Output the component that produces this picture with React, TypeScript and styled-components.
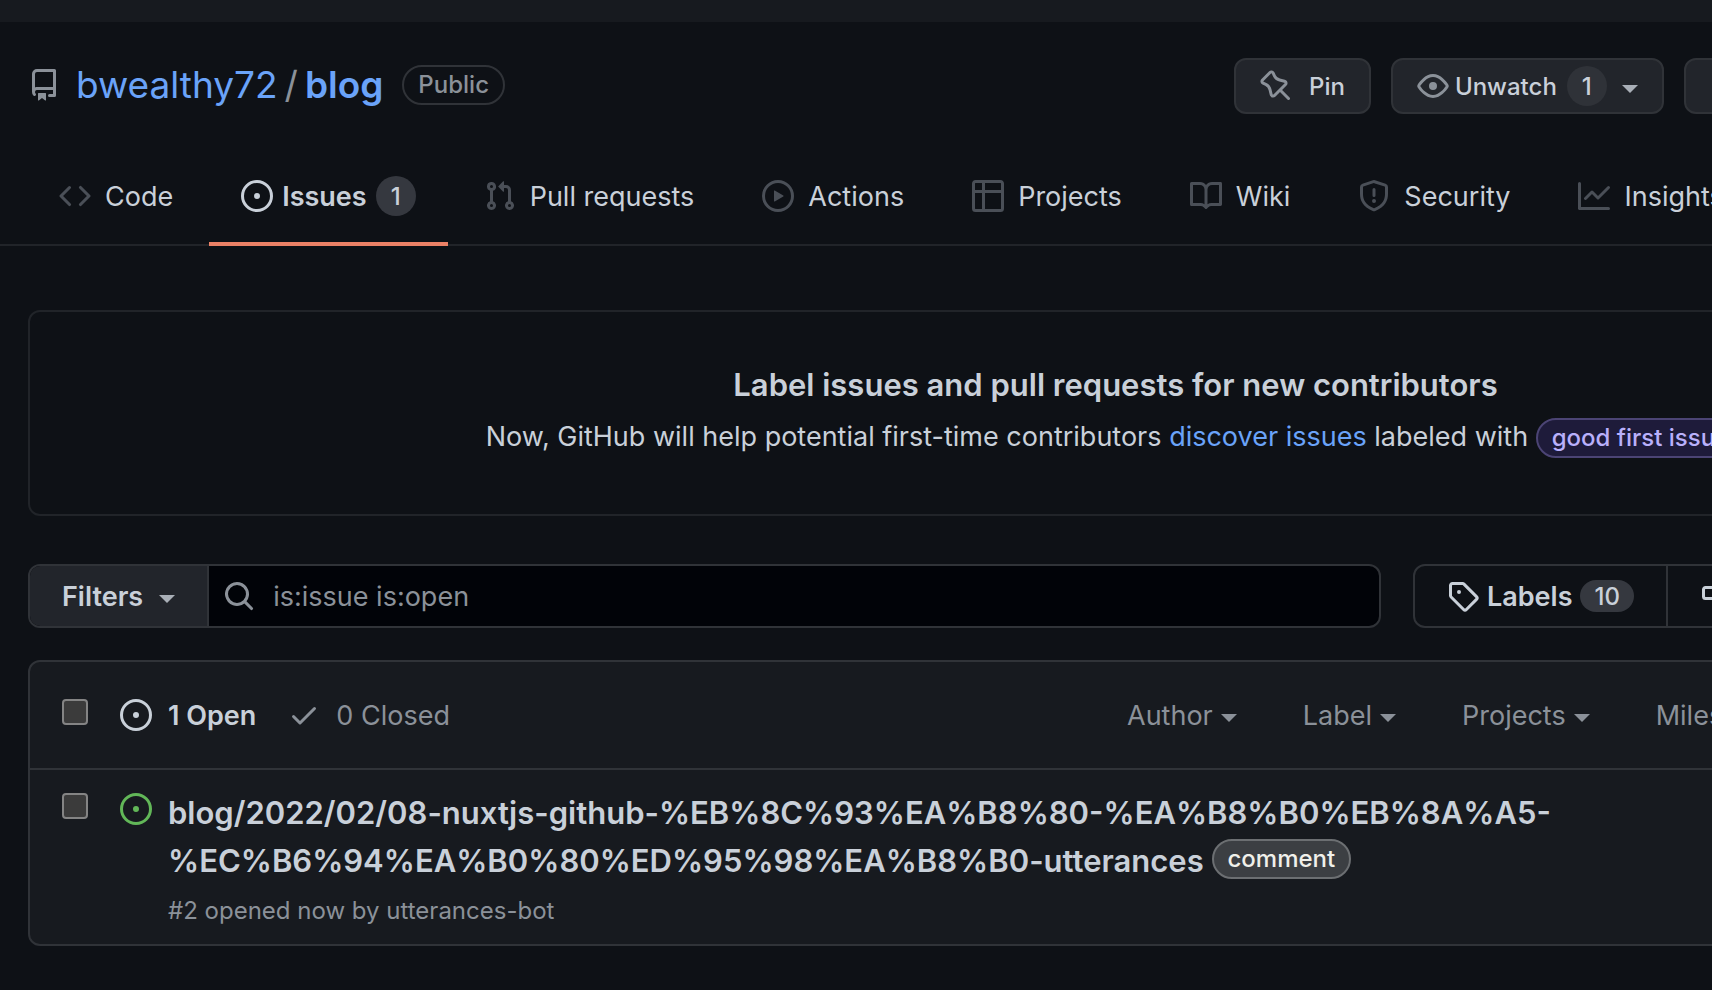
import React from "react";
import styled, { createGlobalStyle, css } from "styled-components";

const color = {
  canvas: "#0e1116",
  inset: "#010308",
  subtle: "#171a1f",
  button: "#22252b",
  border: "#303338",
  borderMuted: "#212429",
  text: "#c9d0d9",
  muted: "#8b9199",
  caret: "#a9afb7",
  faint: "#4a4f57",
  link: "#6aa3f9",
  counter: "#35383f",
  accent: "#eb8166",
  open: "#62b758",
};

const size = { name: "37px", heading: "31px", body: "27px", small: "24px" };

const GlobalStyle = createGlobalStyle`
  *, *::before, *::after { box-sizing: border-box; }
  body {
    margin: 0;
    background: ${color.canvas};
    color: ${color.text};
    font-family: Inter, "Liberation Sans", sans-serif;
    font-size: ${size.body};
  }
  button, input { font: inherit; color: inherit; }
  a { color: inherit; text-decoration: none; }
  h1, h2, h3, p { margin: 0; }
`;

const Viewport = styled.div`
  min-height: 100vh;
  overflow: hidden;
`;

/* The repository page is wider than the window and runs past its right edge. */
const Canvas = styled.div`
  width: calc(100% + 519px);
`;

const TopBar = styled.div`
  height: 22px;
  background: ${color.subtle};
`;

const Header = styled.header`
  display: flex;
  align-items: center;
  padding: 36px 28px;
`;

const RepoTitle = styled.h1`
  flex: 1;
  display: flex;
  align-items: center;
  height: 56px;
  padding-bottom: 3px;
  font-size: ${size.name};
  font-weight: 400;
  line-height: 48px;
  color: ${color.muted};
`;

const OwnerLink = styled.a`
  margin-left: 16px;
  color: ${color.link};
`;

const RepoLink = styled(OwnerLink)`
  margin-left: 0;
  font-weight: 600;
`;

const Slash = styled.span`
  margin: 0 7px;
`;

const pill = css`
  display: inline-block;
  padding: 0 14px;
  border: 2px solid;
  border-radius: 20px;
  font-size: ${size.small};
  font-weight: 500;
  line-height: 36px;
  white-space: nowrap;
`;

const Visibility = styled.span`
  ${pill}
  margin-left: 19px;
  border-color: ${color.border};
`;

const GoodFirstLabel = styled.a`
  ${pill}
  background: #1e1b3a;
  border-color: #4b4474;
  color: #b9b0fb;
`;

const CommentLabel = styled.a`
  ${pill}
  vertical-align: 5px;
  background: #3c3f43;
  border-color: #6c6f72;
  color: #f0f0ea;
`;

const Actions = styled.div`
  flex: 0 0 969px;
  display: flex;
  gap: 20px;
`;

const ActionButton = styled.button<{ $grow?: boolean }>`
  flex: ${(p) => (p.$grow ? "1" : "none")};
  display: flex;
  align-items: center;
  height: 56px;
  padding: 0 24px;
  border: 2px solid ${color.border};
  border-radius: 12px;
  background: ${color.button};
  font-size: ${size.small};
  font-weight: 500;
`;

const Gap = styled.span<{ $w: number }>`
  flex: none;
  width: ${(p) => p.$w}px;
`;

const Icon = styled.svg<{ $color?: string }>`
  flex: none;
  display: block;
  width: 32px;
  height: 32px;
  fill: ${(p) => p.$color ?? "currentColor"};
`;

const Counter = styled.span<{ $wide?: boolean; $bg?: string }>`
  display: inline-flex;
  align-items: center;
  justify-content: center;
  min-width: 40px;
  height: ${(p) => (p.$wide ? "32px" : "40px")};
  padding: 0 ${(p) => (p.$wide ? "14px" : "8px")};
  border-radius: 20px;
  background: ${(p) => p.$bg ?? color.counter};
  font-size: ${size.small};
  font-weight: 500;
`;

const Caret = styled.span<{ $soft?: boolean }>`
  flex: none;
  margin-top: 6px;
  border: 8px solid transparent;
  border-top-color: ${(p) => (p.$soft ? color.caret : "currentColor")};
  border-bottom: 0;
`;

const Tabs = styled.nav`
  display: flex;
  gap: 4px;
  padding-left: 27px;
  border-bottom: 2px solid ${color.borderMuted};
`;

const Tab = styled.a<{ $selected?: boolean }>`
  flex: none;
  display: flex;
  align-items: center;
  gap: ${(p) => (p.$selected ? "9px" : "14px")};
  height: 96px;
  margin-bottom: -2px;
  padding: 0 32px;
  border-bottom: 4px solid ${(p) => (p.$selected ? color.accent : "transparent")};
  font-weight: ${(p) => (p.$selected ? 600 : 400)};
`;

const Stage = styled.main`
  padding: 64px 28px 44px;
`;

const Blankslate = styled.section`
  padding: 49px 64px 56px;
  border: 2px solid ${color.borderMuted};
  border-radius: 12px;
  text-align: center;
`;

const BlankslateTitle = styled.h2`
  font-size: ${size.heading};
  font-weight: 600;
  line-height: 48px;
`;

const BlankslateText = styled.p`
  margin-top: 7px;
  line-height: 42px;
`;

const TextLink = styled.a`
  color: ${color.link};
`;

const Toolbar = styled.div`
  display: flex;
  gap: 32px;
  margin-top: 48px;
`;

const joined = css`
  display: flex;
  height: 64px;
  border: 2px solid ${color.border};
  border-radius: 12px;
  overflow: hidden;
`;

const SearchForm = styled.form`
  ${joined}
  flex: 1;
  background: ${color.inset};
`;

const FiltersButton = styled.button`
  flex: none;
  display: flex;
  align-items: center;
  gap: 16px;
  padding: 0 32px;
  border: 0;
  border-right: 2px solid ${color.border};
  background: ${color.button};
  font-weight: 600;
`;

const SearchField = styled.label`
  flex: 1;
  display: flex;
  align-items: center;
  gap: 18px;
  padding-left: 14px;
  color: ${color.muted};
`;

const SearchInput = styled.input`
  flex: 1;
  min-width: 0;
  height: 100%;
  padding: 0;
  border: 0;
  outline: 0;
  background: transparent;
`;

const LabelNav = styled.nav`
  ${joined}
  flex: 0 0 790px;
`;

const LabelNavLink = styled.a<{ $grow?: boolean }>`
  flex: ${(p) => (p.$grow ? "1" : "none")};
  display: flex;
  align-items: center;
  gap: 8px;
  padding: 0 32px;
  font-weight: 600;

  & + & {
    border-left: 2px solid ${color.border};
  }
`;

const IssueBox = styled.section`
  margin-top: 32px;
  border: 2px solid ${color.border};
  border-radius: 12px;
  background: ${color.subtle};
`;

const IssueBoxHeader = styled.div`
  display: flex;
  align-items: center;
  height: 108px;
  padding-left: 32px;
  border-bottom: 2px solid ${color.border};
  color: ${color.muted};
`;

const Checkbox = styled.input`
  appearance: none;
  flex: none;
  width: 26px;
  height: 26px;
  margin: 0 32px 6px 0;
  border: 2px solid #848484;
  border-radius: 4px;
  background: #3b3b3b;
`;

const StateLink = styled.a<{ $current?: boolean }>`
  display: flex;
  align-items: center;
  gap: 16px;
  margin-right: 32px;
  color: ${(p) => (p.$current ? color.text : "inherit")};
  font-weight: ${(p) => (p.$current ? 600 : 400)};
`;

const FilterMenus = styled.div`
  flex: 0 0 1074px;
  display: flex;
  gap: 66px;
  margin-left: auto;
`;

const FilterMenu = styled.button`
  display: flex;
  align-items: center;
  gap: 8px;
  padding: 0;
  border: 0;
  background: none;
`;

const IssueRow = styled.article`
  display: flex;
  align-items: flex-start;
  padding: 19px 32px 15px;
`;

const RowMark = styled.div`
  display: flex;
  align-items: flex-start;
  padding: 4px 16px 0 0;
`;

const IssueBody = styled.div`
  max-width: 1500px;
`;

const IssueTitle = styled.h3`
  font-size: ${size.heading};
  font-weight: 600;
  line-height: 48px;
`;

const IssueMeta = styled.p`
  margin-top: 8px;
  color: ${color.muted};
  font-size: ${size.small};
  line-height: 36px;
`;

const paths = {
  repo: "M2 2.5A2.5 2.5 0 014.5 0h8.75a.75.75 0 01.75.75v12.5a.75.75 0 01-.75.75h-2.5a.75.75 0 110-1.5h1.75v-2h-8a1 1 0 00-.714 1.7.75.75 0 01-1.072 1.05A2.495 2.495 0 012 11.5v-9zm10.5-1V9h-8c-.356 0-.694.074-1 .208V2.5a1 1 0 011-1h8zM5 12.25v3.25a.25.25 0 00.4.2l1.45-1.087a.25.25 0 01.3 0L8.6 15.7a.25.25 0 00.4-.2v-3.25a.25.25 0 00-.25-.25h-3.5a.25.25 0 00-.25.25z",
  code: "M4.72 3.22a.75.75 0 011.06 1.06L2.06 8l3.72 3.72a.75.75 0 11-1.06 1.06L.47 8.53a.75.75 0 010-1.06l4.25-4.25zm6.56 0a.75.75 0 10-1.06 1.06L13.94 8l-3.72 3.72a.75.75 0 101.06 1.06l4.25-4.25a.75.75 0 000-1.06l-4.25-4.25z",
  issue: "M8 9.5a1.5 1.5 0 100-3 1.5 1.5 0 000 3zM8 0a8 8 0 100 16A8 8 0 008 0zM1.5 8a6.5 6.5 0 1113 0 6.5 6.5 0 01-13 0z",
  pull: "M7.177 3.073L9.573.677A.25.25 0 0110 .854v4.792a.25.25 0 01-.427.177L7.177 3.427a.25.25 0 010-.354zM3.75 2.5a.75.75 0 100 1.5.75.75 0 000-1.5zm-2.25.75a2.25 2.25 0 113 2.122v5.256a2.251 2.251 0 11-1.5 0V5.372A2.25 2.25 0 011.5 3.25zM11 2.5h-1V4h1a1 1 0 011 1v5.628a2.251 2.251 0 101.5 0V5A2.5 2.5 0 0011 2.5zm1 10.25a.75.75 0 111.5 0 .75.75 0 01-1.5 0zM3.75 12a.75.75 0 100 1.5.75.75 0 000-1.5z",
  play: "M1.5 8a6.5 6.5 0 1113 0 6.5 6.5 0 01-13 0zM8 0a8 8 0 100 16A8 8 0 008 0zM6.379 5.227A.25.25 0 006 5.442v5.117a.25.25 0 00.379.214l4.264-2.559a.25.25 0 000-.428L6.379 5.227z",
  table: "M0 1.75C0 .784.784 0 1.75 0h12.5C15.216 0 16 .784 16 1.75v12.5A1.75 1.75 0 0114.25 16H1.75A1.75 1.75 0 010 14.25V1.75zM1.5 6.5v7.75c0 .138.112.25.25.25H5v-8H1.5zM5 5H1.5V1.75a.25.25 0 01.25-.25H5V5zm1.5 1.5v8h7.75a.25.25 0 00.25-.25V6.5h-8zm8-1.5h-8V1.5h7.75a.25.25 0 01.25.25V5z",
  book: "M0 1.75A.75.75 0 01.75 1h4.253c1.227 0 2.317.59 3 1.501A3.744 3.744 0 0111.006 1h4.245a.75.75 0 01.75.75v10.5a.75.75 0 01-.75.75h-4.507a2.25 2.25 0 00-1.591.659l-.622.621a.75.75 0 01-1.06 0l-.622-.621A2.25 2.25 0 005.258 13H.75a.75.75 0 01-.75-.75V1.75zm8.755 3a2.25 2.25 0 012.25-2.25H14.5v9h-3.757c-.71 0-1.4.201-1.992.572l.004-7.322zm-1.504 7.324l.004-5.073-.002-2.253A2.25 2.25 0 005.003 2.5H1.5v9h3.757a3.75 3.75 0 011.994.574z",
  shield: "M7.467.133a1.75 1.75 0 011.066 0l5.25 1.68A1.75 1.75 0 0115 3.48V7c0 1.566-.32 3.182-1.303 4.682-.983 1.498-2.585 2.813-5.032 3.855a1.7 1.7 0 01-1.33 0c-2.447-1.042-4.049-2.357-5.032-3.855C1.32 10.182 1 8.566 1 7V3.48a1.75 1.75 0 011.217-1.667l5.25-1.68zm.61 1.429a.25.25 0 00-.153 0l-5.25 1.68a.25.25 0 00-.174.238V7c0 1.358.275 2.666 1.057 3.86.784 1.194 2.121 2.34 4.366 3.297a.2.2 0 00.154 0c2.245-.956 3.582-2.104 4.366-3.298C13.225 9.666 13.5 8.36 13.5 7V3.48a.25.25 0 00-.174-.237l-5.25-1.68zM9 10.5a1 1 0 11-2 0 1 1 0 012 0zm-.25-5.75a.75.75 0 10-1.5 0v3a.75.75 0 001.5 0v-3z",
  graph: "M1.5 1.75a.75.75 0 00-1.5 0v12.5c0 .414.336.75.75.75h14.5a.75.75 0 000-1.5H1.5V1.75zm14.28 2.53a.75.75 0 00-1.06-1.06L10 7.94 7.53 5.47a.75.75 0 00-1.06 0L3.22 8.72a.75.75 0 001.06 1.06L7 7.06l2.47 2.47a.75.75 0 001.06 0l5.25-5.25z",
  pin: "M4.456.734a1.75 1.75 0 012.826.504l.613 1.327a3.081 3.081 0 002.084 1.707l2.454.584c1.332.317 1.8 1.972.832 2.94L11.06 10l3.72 3.72a.75.75 0 11-1.061 1.06L10 11.06l-2.204 2.205c-.968.968-2.623.5-2.94-.832l-.584-2.454a3.081 3.081 0 00-1.707-2.084l-1.327-.613a1.75 1.75 0 01-.504-2.826L4.456.734zM5.92 1.866a.25.25 0 00-.404-.072L1.794 5.516a.25.25 0 00.072.404l1.328.613A4.582 4.582 0 015.73 9.63l.584 2.454a.25.25 0 00.42.12l5.47-5.47a.25.25 0 00-.12-.42L9.63 5.73a4.581 4.581 0 01-3.098-2.537L5.92 1.866z",
  eye: "M1.679 7.932c.412-.621 1.242-1.75 2.366-2.717C5.175 4.242 6.527 3.5 8 3.5c1.473 0 2.824.742 3.955 1.715 1.124.967 1.954 2.096 2.366 2.717a.119.119 0 010 .136c-.412.621-1.242 1.75-2.366 2.717C10.825 11.758 9.473 12.5 8 12.5c-1.473 0-2.824-.742-3.955-1.715C2.92 9.818 2.09 8.69 1.679 8.068a.119.119 0 010-.136zM8 2c-1.981 0-3.67.992-4.933 2.078C1.797 5.169.88 6.423.43 7.1a1.619 1.619 0 000 1.798c.45.678 1.367 1.932 2.637 3.024C4.329 13.008 6.019 14 8 14c1.981 0 3.67-.992 4.933-2.078 1.27-1.091 2.187-2.345 2.637-3.023a1.619 1.619 0 000-1.798c-.45-.678-1.367-1.932-2.637-3.023C11.671 2.992 9.981 2 8 2zm0 8a2 2 0 100-4 2 2 0 000 4z",
  search: "M11.5 7a4.499 4.499 0 11-8.998 0A4.499 4.499 0 0111.5 7zm-.82 4.74a6 6 0 111.06-1.06l3.04 3.04a.75.75 0 11-1.06 1.06l-3.04-3.04z",
  tag: "M2.5 7.775V2.75a.25.25 0 01.25-.25h5.025a.25.25 0 01.177.073l6.25 6.25a.25.25 0 010 .354l-5.025 5.025a.25.25 0 01-.354 0l-6.25-6.25a.25.25 0 01-.073-.177zm-1.5 0V2.75C1 1.784 1.784 1 2.75 1h5.025c.464 0 .91.184 1.238.513l6.25 6.25a1.75 1.75 0 010 2.474l-5.026 5.026a1.75 1.75 0 01-2.474 0l-6.25-6.25A1.75 1.75 0 011 7.775zM6 5a1 1 0 100 2 1 1 0 000-2z",
  check: "M13.78 4.22a.75.75 0 010 1.06l-7.25 7.25a.75.75 0 01-1.06 0L2.22 9.28a.75.75 0 011.06-1.06L6 10.94l6.72-6.72a.75.75 0 011.06 0z",
  milestone: "M7.75 0a.75.75 0 01.75.75V3h3.634c.414 0 .814.147 1.13.414l2.07 1.75a1.75 1.75 0 010 2.672l-2.07 1.75a1.75 1.75 0 01-1.13.414H8.5v5.25a.75.75 0 11-1.5 0V10H2.75A1.75 1.75 0 011 8.25v-3.5C1 3.784 1.784 3 2.75 3H7V.75A.75.75 0 017.75 0zm0 8.5h4.384a.25.25 0 00.161-.06l2.07-1.75a.25.25 0 000-.38l-2.07-1.75a.25.25 0 00-.161-.06H2.75a.25.25 0 00-.25.25v3.5c0 .138.112.25.25.25h5z",
};

type IconName = keyof typeof paths;

function Octicon({ name, tint }: { name: IconName; tint?: string }) {
  return (
    <Icon viewBox="0 0 16 16" $color={tint} aria-hidden="true">
      <path fillRule="evenodd" d={paths[name]} />
    </Icon>
  );
}

const tabs: { icon: IconName; label: string; count?: number }[] = [
  { icon: "code", label: "Code" },
  { icon: "issue", label: "Issues", count: 1 },
  { icon: "pull", label: "Pull requests" },
  { icon: "play", label: "Actions" },
  { icon: "table", label: "Projects" },
  { icon: "book", label: "Wiki" },
  { icon: "shield", label: "Security" },
  { icon: "graph", label: "Insights" },
];

const menus = ["Author", "Label", "Projects", "Milestones"];

export default function App() {
  return (
    <Viewport>
      <GlobalStyle />
      <Canvas>
        <TopBar />
        <Header>
          <RepoTitle>
            <Octicon name="repo" />
            <OwnerLink href="#owner">bwealthy72</OwnerLink>
            <Slash>/</Slash>
            <RepoLink href="#repo">blog</RepoLink>
            <Visibility>Public</Visibility>
          </RepoTitle>
          <Actions>
            <ActionButton type="button">
              <Octicon name="pin" tint={color.muted} />
              <Gap $w={17} />
              Pin
            </ActionButton>
            <ActionButton type="button">
              <Octicon name="eye" tint={color.muted} />
              <Gap $w={6} />
              Unwatch
              <Gap $w={10} />
              <Counter $bg="#2f3238">1</Counter>
              <Gap $w={15} />
              <Caret $soft />
            </ActionButton>
            <ActionButton type="button" $grow aria-label="Fork" />
          </Actions>
        </Header>
        <Tabs aria-label="Repository">
          {tabs.map((t) => {
            const selected = t.label === "Issues";
            return (
              <Tab key={t.label} href={`#${t.icon}`} $selected={selected}>
                <Octicon name={t.icon} tint={selected ? color.text : color.faint} />
                {t.label}
                {t.count !== undefined && <Counter>{t.count}</Counter>}
              </Tab>
            );
          })}
        </Tabs>
        <Stage>
          <Blankslate>
            <BlankslateTitle>Label issues and pull requests for new contributors</BlankslateTitle>
            <BlankslateText>
              Now, GitHub will help potential first-time contributors{" "}
              <TextLink href="#discover">discover issues</TextLink> labeled with{" "}
              <GoodFirstLabel href="#good-first-issue">good first issue</GoodFirstLabel>
            </BlankslateText>
          </Blankslate>
          <Toolbar>
            <SearchForm>
              <FiltersButton type="button">
                Filters
                <Caret $soft />
              </FiltersButton>
              <SearchField>
                <Octicon name="search" />
                <SearchInput type="text" aria-label="Search all issues" defaultValue="is:issue is:open" />
              </SearchField>
            </SearchForm>
            <LabelNav aria-label="Issue tools">
              <LabelNavLink href="#labels">
                <Octicon name="tag" />
                Labels
                <Counter $wide>10</Counter>
              </LabelNavLink>
              <LabelNavLink href="#milestones" $grow aria-label="Milestones">
                <Octicon name="milestone" />
              </LabelNavLink>
            </LabelNav>
          </Toolbar>
          <IssueBox>
            <IssueBoxHeader>
              <Checkbox type="checkbox" aria-label="Select all issues" />
              <StateLink href="#open" $current>
                <Octicon name="issue" />1 Open
              </StateLink>
              <StateLink href="#closed">
                <Octicon name="check" />0 Closed
              </StateLink>
              <FilterMenus>
                {menus.map((m) => (
                  <FilterMenu key={m} type="button">
                    {m}
                    <Caret />
                  </FilterMenu>
                ))}
              </FilterMenus>
            </IssueBoxHeader>
            <IssueRow>
              <RowMark>
                <Checkbox type="checkbox" aria-label="Select issue 2" />
                <Octicon name="issue" tint={color.open} />
              </RowMark>
              <IssueBody>
                <IssueTitle>
                  <a href="#issue-2">
                    blog/2022/02/08-nuxtjs-github-%EB%8C%93%EA%B8%80-%EA%B8%B0%EB%8A%A5-
                    <wbr />
                    %EC%B6%94%EA%B0%80%ED%95%98%EA%B8%B0-utterances
                  </a>{" "}
                  <CommentLabel href="#comment">comment</CommentLabel>
                </IssueTitle>
                <IssueMeta>#2 opened now by utterances-bot</IssueMeta>
              </IssueBody>
            </IssueRow>
          </IssueBox>
        </Stage>
      </Canvas>
    </Viewport>
  );
}
